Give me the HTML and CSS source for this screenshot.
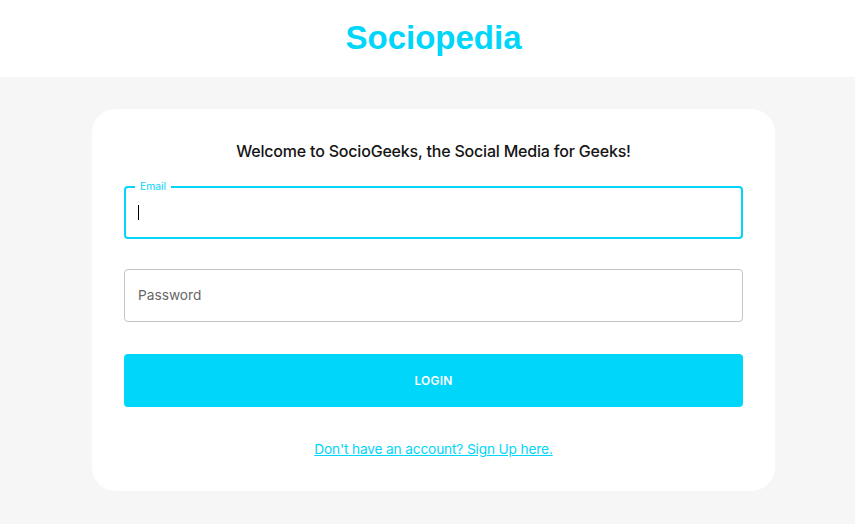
FILE: index.html
```html
<!DOCTYPE html>
<html lang="en">
<head>
<meta charset="utf-8">
<title>Sociopedia</title>
<link rel="stylesheet" href="styles.css">
</head>
<body>
<header class="topbar">
  <h1 class="brand">Sociopedia</h1>
</header>
<main class="card">
  <h5 class="welcome">Welcome to SocioGeeks, the Social Media for Geeks!</h5>
  <form class="form">
    <div class="field field-focused">
      <span class="field-label">Email</span>
      <span class="caret"></span>
    </div>
    <div class="field">
      <span class="placeholder">Password</span>
    </div>
    <button type="button" class="login">LOGIN</button>
    <a class="signup" href="#">Don't have an account? Sign Up here.</a>
  </form>
</main>
</body>
</html>
```

FILE: styles.css
```css
* { box-sizing: border-box; }
html, body { margin: 0; padding: 0; }
body {
  background: #f6f6f6;
  font-family: Inter, "Noto Sans", sans-serif;
  color: #141414;
  width: 855px;
  height: 524px;
  overflow: hidden;
}
.topbar {
  height: 77px;
  background: #ffffff;
  display: flex;
  align-items: center;
  justify-content: center;
  padding-left: 12px;
  padding-bottom: 3px;
}
.brand {
  margin: 0;
  font-family: "Liberation Sans", Arial, sans-serif;
  font-weight: 700;
  font-size: 33px;
  color: #00d5fa;
  line-height: 1;
}
.card {
  width: 683px;
  margin: 32px 0 0 92px;
  background: #ffffff;
  border-radius: 24px;
  padding: 32px;
}
.welcome {
  margin: 0 0 24px 0;
  font-size: 16px;
  font-weight: 500;
  line-height: 21px;
  letter-spacing: -0.2px;
  text-align: center;
  color: #141414;
}
.form {
  display: flex;
  flex-direction: column;
}
.field {
  position: relative;
  height: 53px;
  border: 1px solid #c4c4c4;
  border-radius: 4px;
  display: flex;
  align-items: center;
  padding-left: 13px;
  margin-bottom: 30px;
}
.field-focused {
  border: 2px solid #00d5fa;
  padding-left: 12px;
}
.field-label {
  position: absolute;
  left: 9px;
  top: -8px;
  padding: 0 5px;
  background: #ffffff;
  font-size: 10.3px;
  line-height: 12px;
  color: #00d5fa;
}
.caret {
  display: block;
  width: 1px;
  height: 15px;
  background: #000000;
}
.placeholder {
  font-size: 13.7px;
  color: #666666;
  margin-top: -2px;
}
.login {
  margin: 2px 0 32px 0;
  height: 53px;
  border: none;
  border-radius: 4px;
  background: #00d5fa;
  color: #ffffff;
  font-family: Inter, "Noto Sans", sans-serif;
  font-size: 12px;
  font-weight: 600;
  letter-spacing: 0.2px;
}
.signup {
  align-self: center;
  font-size: 13.7px;
  line-height: 20px;
  letter-spacing: -0.15px;
  color: #00d5fa;
  text-decoration: underline;
}
```
